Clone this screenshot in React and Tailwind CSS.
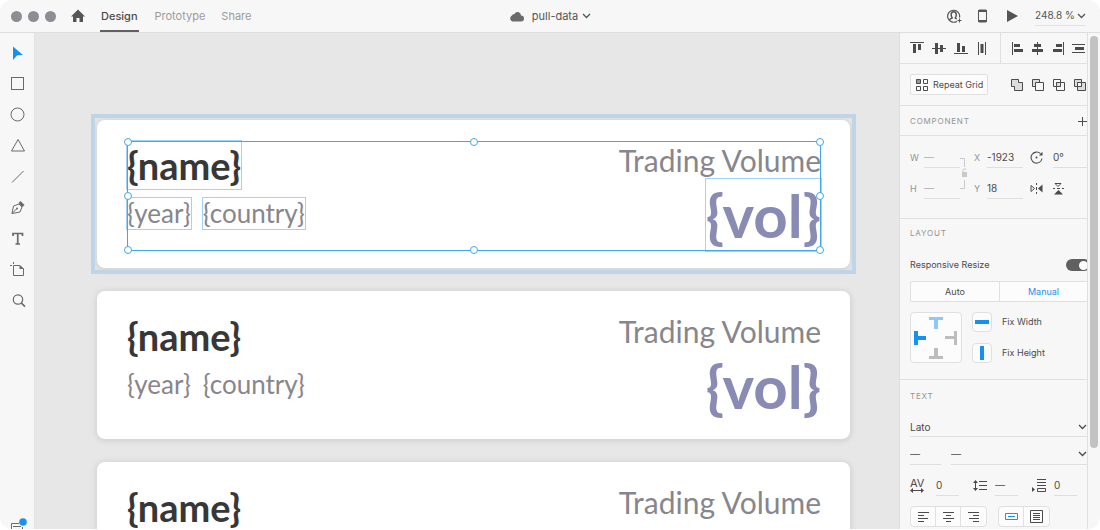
import { useState } from 'react'

const Icon = ({ w = 14, h = 14, className = '', children }) => (
  <svg width={w} height={h} viewBox={`0 0 ${w} ${h}`} fill="none" stroke="currentColor" className={`shrink-0 ${className}`} aria-hidden="true">
    {children}
  </svg>
)

const Chevron = ({ className = '' }) => (
  <Icon w={9} h={6} className={className}>
    <path d="M1 1l3.500 3.500L8 1" strokeWidth="1.300" />
  </Icon>
)

const tools = [
  { name: 'Select', icon: <path d="M4 2.500v13.500l4.200-4.700 5.800-.3z" fill="#1591ef" stroke="none" /> },
  { name: 'Rectangle', icon: <rect x="2.500" y="2.500" width="12" height="12" /> },
  { name: 'Ellipse', icon: <circle cx="8.500" cy="8.500" r="6.500" /> },
  { name: 'Polygon', icon: <path d="M9 2.500l6.500 11.500h-13z" /> },
  { name: 'Line', icon: <path d="M3 14.500L14.500 3" /> },
  {
    name: 'Pen',
    icon: (
      <>
        <path d="M3 14.500l1.500-7.500 5.500-2 3 3-2 5zM3 14.500l4.500-4.500" />
        <circle cx="8" cy="9.500" r="1" fill="currentColor" stroke="none" />
        <path d="M9.500 4l2-2 4 4-2 2z" fill="currentColor" stroke="none" />
      </>
    ),
  },
  { name: 'Text', icon: <path d="M4 6V3.500h9.500V6M8.750 3.500v10.500M6.500 14h4.500" strokeWidth="1.700" /> },
  {
    name: 'Artboard',
    icon: (
      <>
        <path d="M4.500 4.500h6.500l3.500 3.500v6.500h-10z" />
        <path d="M10.500 4v4h4.500z" fill="currentColor" stroke="none" />
        <path d="M1 4.500h2M4.500 1v2" />
      </>
    ),
  },
  {
    name: 'Zoom',
    icon: (
      <>
        <circle cx="9" cy="7.500" r="4.700" strokeWidth="1.200" />
        <path d="M12.300 11l3.700 3.700" strokeWidth="1.700" />
      </>
    ),
  },
]

const alignTop = [
  { name: 'Align top', icon: <><path d="M0 1.500h14" /><path d="M3 3h3v9H3zM8 3h3v6H8z" fill="currentColor" stroke="none" /></> },
  { name: 'Align middle', icon: <><path d="M0 7.500h14" /><path d="M3 2h3v11H3zM8 4h3v7H8z" fill="currentColor" stroke="none" /></> },
  { name: 'Align bottom', icon: <><path d="M0 12.500h14" /><path d="M3 2h3v9H3zM8 5h3v6H8z" fill="currentColor" stroke="none" /></> },
  { name: 'Distribute horizontally', icon: <><path d="M2.500 1v13M9.500 1v13" /><path d="M4.500 3h3v9h-3z" fill="currentColor" stroke="none" /></> },
]

const alignSide = [
  { name: 'Align left', icon: <><path d="M1.500 1v13" /><path d="M3 3h6v3H3zM3 8h9v3H3z" fill="currentColor" stroke="none" /></> },
  { name: 'Align center', icon: <><path d="M6.500 1v13" /><path d="M3 3h7v3H3zM1 8h11v3H1z" fill="currentColor" stroke="none" /></> },
  { name: 'Align right', icon: <><path d="M12.500 1v13" /><path d="M5 3h6v3H5zM2 8h9v3H2z" fill="currentColor" stroke="none" /></> },
  { name: 'Distribute vertically', icon: <><path d="M1 3.500h14M1 11.500h14" /><path d="M4 6h9v3H4z" fill="currentColor" stroke="none" /></> },
]

const booleans = [
  { name: 'Add', icon: <path d="M1.500 1.500h7v3h4v8h-8v-4h-3z" fill="#ddd" /> },
  { name: 'Subtract', icon: <><path d="M1.500 1.500h7v7h-7z" fill="#ddd" /><path d="M4.500 4.500h8v8h-8z" fill="#f7f7f7" /></> },
  { name: 'Intersect', icon: <><path d="M1.500 1.500h7v7h-7zM4.500 4.500h8v8h-8z" /><path d="M4.500 4.500h4v4h-4z" fill="#ddd" /></> },
  { name: 'Exclude overlap', icon: <><path d="M1.500 1.500h7v7h-7zM4.500 4.500h8v8h-8z" fill="#ddd" /><path d="M4.500 4.500h4v4h-4z" fill="#f7f7f7" /></> },
]

const textAligns = [
  { name: 'Left', d: 'M1 2.500h11M1 5.500h6M1 8.500h10M1 11.500h6' },
  { name: 'Center', d: 'M1 2.500h11M4 5.500h5M1 8.500h11M4 11.500h5' },
  { name: 'Right', d: 'M1 2.500h11M6 5.500h6M2 8.500h10M6 11.500h6' },
]

// spots of the eight-point frame that are used on the selected group
const handles = [
  'left-0 top-0',
  'left-1/2 top-0',
  'left-full top-0',
  'left-0 top-1/2',
  'left-full top-1/2',
  'left-0 top-full',
  'left-1/2 top-full',
  'left-full top-full',
]

const Header = () => (
  <header className="grid grid-cols-[1fr_auto_1fr] items-center h-[33px] shrink-0 border-b border-[#dedede] bg-[#f7f7f7] text-[11px] text-[#555]">
    <div className="flex items-center h-full pl-[11px]">
      <div className="flex gap-[6px] pr-[15px]">
        <span className="size-[11px] rounded-full bg-[#8e8d93]" />
        <span className="size-[11px] rounded-full bg-[#8e8d93]" />
        <span className="size-[11px] rounded-full bg-[#8e8d93]" />
      </div>
      <button aria-label="Home" className="mr-[15px]">
        <Icon className="block">
          <path d="M7 .5L14 7.500h-2V13H8.500V9h-3v4H2V7.500H0z" fill="currentColor" stroke="none" />
        </Icon>
      </button>
      <nav className="flex h-full text-[#9b9b9b]">
        <a href="#design" className="flex items-center h-full border-y-2 border-t-transparent border-b-[#606060] px-px font-medium text-[#4b4b4b]">Design</a>
        <a href="#prototype" className="flex items-center pl-4">Prototype</a>
        <a href="#share" className="flex items-center pl-4">Share</a>
      </nav>
    </div>
    <button className="flex items-center">
      <Icon w={15} h={11} className="mr-2 text-[#6b6b6b]">
        <path d="M3.500 10.500a3.200 3.200 0 0 1-.5-6 2.300 2.300 0 0 1 2.400-1.600A3.500 3.500 0 0 1 12 4.500a3 3 0 0 1 0 6z" fill="currentColor" stroke="none" />
      </Icon>
      pull-data
      <Chevron className="ml-1" />
    </button>
    <div className="flex items-center justify-end pr-[14px]">
      <button aria-label="Share with people" className="mr-4">
        <Icon w={15} h={14} className="block">
          <path d="M10 12.200A6 6 0 1 1 12.500 8.500" strokeWidth="1.200" />
          <path d="M2.500 10.800c.8-1.200 2-1.300 2.700-1.800C3.700 7 3.500 2.800 6.700 2.800S9.800 7 8.300 9c.5.5 1 .6 1.500.8" strokeWidth="1.500" />
          <path d="M12.500 9.500v4M10.500 11.500h4" />
        </Icon>
      </button>
      <button aria-label="Device preview" className="mr-5">
        <Icon w={9} h={14} className="block">
          <rect x=".5" y="1" width="8" height="12" rx="1" />
          <path d="M0 2h9M0 12h9" strokeWidth="2" />
        </Icon>
      </button>
      <button aria-label="Desktop preview" className="mr-[17px]">
        <Icon w={11} h={12} className="block">
          <path d="M0 0l11 6-11 6z" fill="currentColor" stroke="none" />
        </Icon>
      </button>
      <button className="flex items-center justify-between w-[51px] h-[19px] border-b border-[#e3e3e3] text-[10px]">
        248.8 %
        <Chevron />
      </button>
    </div>
  </header>
)

const Toolbar = () => (
  <aside className="flex flex-col w-[35px] shrink-0 border-r border-[#e3e3e3] bg-[#f7f7f7] pt-1 text-[#6a6a6a]">
    {tools.map(tool => (
      <button key={tool.name} aria-label={tool.name} className="flex items-center justify-center h-[31px]">
        <Icon w={17} h={17}>{tool.icon}</Icon>
      </button>
    ))}
    <button aria-label="Layers" className="mt-auto pl-[10px]">
      <Icon w={18} h={11} className="block">
        <path d="M9 5.500H1.500V12M3 8.500h8M12.500 9v3" />
        <circle cx="13" cy="4" r="3.800" fill="#1e90ef" stroke="none" />
      </Icon>
    </button>
  </aside>
)

const Card = ({ selected }) => {
  const box = selected ? 'outline outline-[#9fd3f7]' : ''
  return (
    <div className={selected ? 'outline-4 outline-offset-2 outline-[#bdd5e6]' : ''}>
      <article className="rounded-lg bg-white pt-[21px] pb-[17px] pl-[30px] pr-[29px] shadow-[0_1px_5px_2px_#d4d4d4]">
        <div className="relative flex justify-between h-[110px] font-['Lato',sans-serif] text-[#87868c]">
          <div>
            <h2 className={`w-fit text-[38px] leading-[48px] font-bold text-[#373737] ${box}`}>{'{name}'}</h2>
            <div className="flex gap-3 mt-[9px] text-[26px] leading-[31px]">
              <span className={box}>{'{year}'}</span>
              <span className={box}>{'{country}'}</span>
            </div>
          </div>
          <div className="flex flex-col items-end">
            <h3 className="text-[30px] leading-[38px]">Trading Volume</h3>
            <p className={`text-[60px] leading-[72px] font-bold text-[#8a8bb5] ${box}`}>{'{vol}'}</p>
          </div>
          {
            selected &&
            <div className="absolute inset-0 border border-[#41a6ea]">
              {handles.map(spot => (
                <span key={spot} className={`absolute size-2 -translate-1/2 rounded-full border border-[#41a6ea] bg-white ${spot}`} />
              ))}
            </div>
          }
        </div>
      </article>
    </div>
  )
}

const Canvas = () => (
  <main className="flex-1 min-w-0 overflow-hidden bg-[#e7e7e7]">
    <div className="flex flex-col gap-[23px] pt-[87px] pl-[62px] pr-[49px]">
      <Card selected />
      <Card />
      <Card />
    </div>
  </main>
)

const Heading = ({ children }) => (
  <h4 className="text-[8px] leading-3 tracking-widest text-[#949494]">{children}</h4>
)

const Field = ({ id, label, value }) => (
  <>
    <label htmlFor={id} className="text-[9px] text-[#949494]">{label}</label>
    <input id={id} defaultValue={value} className={`w-full min-w-0 h-[21px] border-b border-[#dfdfdf] outline-none ${value === '—' ? 'text-[#aaa]' : ''}`} />
  </>
)

const IconRow = ({ items, className = '' }) => (
  <div className={`flex items-center ${className}`}>
    {items.map(item => (
      <button key={item.name} aria-label={item.name}>
        <Icon className="block">{item.icon}</Icon>
      </button>
    ))}
  </div>
)

const Transform = () => (
  <section className="grid grid-cols-[14px_36px_14px_13px_36px_30px_1fr] gap-y-[10px] items-center border-b border-[#e0e0e0] pt-[11px] pb-[19px] pl-[10px] text-[10px]">
    <Field id="w" label="W" value="—" />
    <div className="row-span-2 self-center">
      <Icon w={7} h={33} className="block text-[#c9c9c9]">
        <path d="M0 1.500h4.500V10M0 31.500h4.500V23" />
        <path d="M2 15h5v5H2z" fill="currentColor" stroke="none" />
        <path d="M3 15v-1.500a1.500 1.500 0 0 1 3-.5" />
      </Icon>
    </div>
    <Field id="x" label="X" value="-1923" />
    <label htmlFor="rotation" aria-label="Rotation" className="pl-[7px]">
      <Icon w={13} h={13}>
        <path d="M12 7.500A5.500 5.500 0 1 1 10.500 2.700" strokeWidth="1.100" />
        <path d="M9 4.500h3.500V.8z" fill="currentColor" stroke="none" />
        <circle cx="6.500" cy="6.500" r="1" fill="currentColor" stroke="none" />
      </Icon>
    </label>
    <input id="rotation" defaultValue="0°" className="w-full min-w-0 h-[21px] border-b border-[#dfdfdf] outline-none" />
    <Field id="h" label="H" value="—" />
    <Field id="y" label="Y" value="18" />
    <button aria-label="Flip horizontal" className="pl-[7px]">
      <Icon w={13} h={11} className="block">
        <path d="M1 2.500v6l3.500-3zM6.500 0v2M6.500 4v3M6.500 9v2" />
        <path d="M12.500 1.500v8L8 5.500z" fill="currentColor" stroke="none" />
      </Icon>
    </button>
    <button aria-label="Flip vertical">
      <Icon w={11} h={13} className="block">
        <path d="M2 1.500h6l-3 3zM0 6.500h2M4 6.500h3M9 6.500h2" />
        <path d="M1 12.500h9L5.500 8z" fill="currentColor" stroke="none" />
      </Icon>
    </button>
  </section>
)

const Layout = () => {
  const [mode, setMode] = useState('Manual')

  return (
    <section className="border-b border-[#e0e0e0] pt-2 pb-4 pl-[10px] text-[9px]">
      <Heading>LAYOUT</Heading>
      <label className="flex items-center justify-between mt-5 h-3">
        Responsive Resize
        <input type="checkbox" role="switch" defaultChecked className="appearance-none flex items-center justify-end w-6 h-3 -mr-[3px] rounded-full bg-[#606060] px-[2px] before:size-[9px] before:rounded-full before:bg-white" />
      </label>
      <div className="grid grid-cols-2 mt-[10px] h-[21px] rounded-l-xs border border-r-0 border-[#e0e0e0] bg-[#fcfcfc]">
        {['Auto', 'Manual'].map(name => (
          <button key={name} onClick={() => setMode(name)} className={`border-[#e0e0e0] last:border-l ${mode === name ? 'text-[#1e90ef]' : ''}`}>{name}</button>
        ))}
      </div>
      <div className="flex gap-[10px] mt-[10px]">
        <button aria-label="Constraints" className="flex items-center justify-center w-[52px] h-[51px] rounded-sm border border-[#e0e0e0] bg-[#fcfcfc]">
          <Icon w={44} h={44}>
            <path d="M15 1h14v3h-5v9h-4V4h-5z" fill="#8dc8f7" stroke="none" />
            <path d="M0 15h4v5h8v4H4v5H0z" fill="#1591ef" stroke="none" />
            <path d="M43 15h-3v5h-9v3h9v6h3z" fill="#bdbdbd" stroke="none" />
            <path d="M15 43h14v-3h-5v-8h-4v8h-5z" fill="#bdbdbd" stroke="none" />
          </Icon>
        </button>
        <div className="flex flex-col justify-between">
          <div className="flex items-center gap-[10px]">
            <button id="fix-width" className="flex items-center justify-center size-5 rounded-sm border border-[#e0e0e0] bg-[#fcfcfc]">
              <span className="w-[14px] h-1 bg-[#1591ef]" />
            </button>
            <label htmlFor="fix-width">Fix Width</label>
          </div>
          <div className="flex items-center gap-[10px]">
            <button id="fix-height" className="flex items-center justify-center size-5 rounded-sm border border-[#e0e0e0] bg-[#fcfcfc]">
              <span className="w-1 h-[14px] bg-[#1591ef]" />
            </button>
            <label htmlFor="fix-height">Fix Height</label>
          </div>
        </div>
      </div>
    </section>
  )
}

const Dropdown = ({ label, value, className = '' }) => (
  <div className={`grid items-center border-b border-[#dfdfdf] ${className}`}>
    <select aria-label={label} className="appearance-none col-start-1 row-start-1 w-full outline-none">
      <option>{value}</option>
    </select>
    <Chevron className="col-start-1 row-start-1 justify-self-end pointer-events-none" />
  </div>
)

const TextSection = () => (
  <section className="pt-[10px] pl-[10px] text-[10px]">
    <Heading>TEXT</Heading>
    <Dropdown label="Font" value="Lato" className="h-[19px] mt-4" />
    <div className="flex gap-[10px] mt-[7px]">
      <input aria-label="Font size" defaultValue="—" className="w-[31px] h-[21px] border-b border-[#dfdfdf] outline-none" />
      <Dropdown label="Font weight" value="—" className="flex-1 h-[21px]" />
    </div>
    <div className="grid grid-cols-[26px_23px_14px_22px_23px_14px_22px_23px] items-center mt-[10px]">
      <label htmlFor="tracking" className="flex flex-col text-[11px] leading-[9px]">
        AV
        <Icon w={14} h={5} className="block">
          <path d="M2 2.500h10" />
          <path d="M0 2.500L3 0v5zM14 2.500L11 0v5z" fill="currentColor" stroke="none" />
        </Icon>
      </label>
      <input id="tracking" defaultValue="0" className="w-full h-[21px] border-b border-[#dfdfdf] outline-none" />
      <label htmlFor="leading" aria-label="Line spacing" className="col-start-4">
        <Icon w={14} h={13}>
          <path d="M2.500 2v9M6 2.500h8M6 6.500h8M6 10.500h8" />
          <path d="M0 4l2.500-3L5 4zM0 9l2.500 3L5 9z" fill="currentColor" stroke="none" />
        </Icon>
      </label>
      <input id="leading" defaultValue="—" className="w-full h-[21px] border-b border-[#dfdfdf] outline-none" />
      <label htmlFor="paragraph" aria-label="Paragraph spacing" className="col-start-7">
        <Icon w={15} h={13}>
          <path d="M5 .5h9M5 3.500h9M5 6.500h9M5.500 9.500h8v3h-8z" />
          <path d="M0 8l3 2.500L0 13z" fill="currentColor" stroke="none" />
        </Icon>
      </label>
      <input id="paragraph" defaultValue="0" className="w-full h-[21px] border-b border-[#dfdfdf] outline-none" />
    </div>
    <div className="flex gap-[11px] mt-[10px]">
      <div className="flex h-[21px] divide-x divide-[#e0e0e0] rounded-sm border border-[#e0e0e0] bg-[#fcfcfc]">
        {textAligns.map(align => (
          <button key={align.name} aria-label={align.name} className="flex items-center justify-center w-[25px]">
            <Icon w={13}><path d={align.d} /></Icon>
          </button>
        ))}
      </div>
      <div className="flex h-[21px] divide-x divide-[#e0e0e0] rounded-sm border border-[#e0e0e0] bg-[#fcfcfc]">
        <button aria-label="Auto width" className="flex items-center justify-center w-[25px] text-[#1e90ef]">
          <Icon w={13} h={7}><path d="M.5.500h12v6H.5zM3 3.500h7" /></Icon>
        </button>
        <button aria-label="Fixed size" className="flex items-center justify-center w-[25px]">
          <Icon w={13} h={13}><path d="M.5.500h12v12H.5zM3 3.500h7M3 5.500h7M3 7.500h7M3 9.500h7" /></Icon>
        </button>
      </div>
    </div>
  </section>
)

const Inspector = () => (
  <aside className="flex w-[201px] shrink-0 border-l border-[#dedede] bg-[#f7f7f7] text-[#4b4b4b]">
    <div className="w-[188px] shrink-0 overflow-hidden border-r border-[#e0e0e0]">
      <section className="grid grid-cols-[100px_1fr] h-[31px] border-b border-[#e0e0e0]">
        <IconRow items={alignTop} className="gap-2 pl-[10px]" />
        <IconRow items={alignSide} className="gap-[6px] border-l border-[#e0e0e0] pl-[10px]" />
      </section>
      <section className="flex items-center justify-between h-[42px] border-b border-[#e0e0e0] pl-[10px]">
        <button className="flex items-center gap-[5px] w-[78px] h-[21px] rounded-xs border border-[#e0e0e0] bg-[#fcfcfc] pl-[5px] text-[9px] whitespace-nowrap">
          <Icon w={12} h={12}>
            <path d="M.5.500h4v4h-4z" fill="#999" />
            <path d="M7.500.500h4v4h-4zM.5 7.500h4v4h-4zM7.500 7.500h4v4h-4z" />
          </Icon>
          Repeat Grid
        </button>
        <IconRow items={booleans} className="gap-[7px]" />
      </section>
      <section className="flex items-center justify-between h-[30px] border-b border-[#e0e0e0] pl-[10px]">
        <Heading>COMPONENT</Heading>
        <button aria-label="Add component">
          <Icon w={10} h={10} className="block"><path d="M5.500 1v9M1 5.500h9" /></Icon>
        </button>
      </section>
      <Transform />
      <Layout />
      <TextSection />
    </div>
    <div className="flex-1 px-[2px] pt-[3px]">
      <div className="w-2 h-[412px] rounded-full bg-[#c2c2c2]" />
    </div>
  </aside>
)

const App = () => (
  <div className="h-screen bg-white pb-px font-['Inter',sans-serif]">
    <div className="flex flex-col h-full overflow-hidden rounded-xl">
      <Header />
      <div className="flex flex-1 min-h-0">
        <Toolbar />
        <Canvas />
        <Inspector />
      </div>
    </div>
  </div>
)

export default App
